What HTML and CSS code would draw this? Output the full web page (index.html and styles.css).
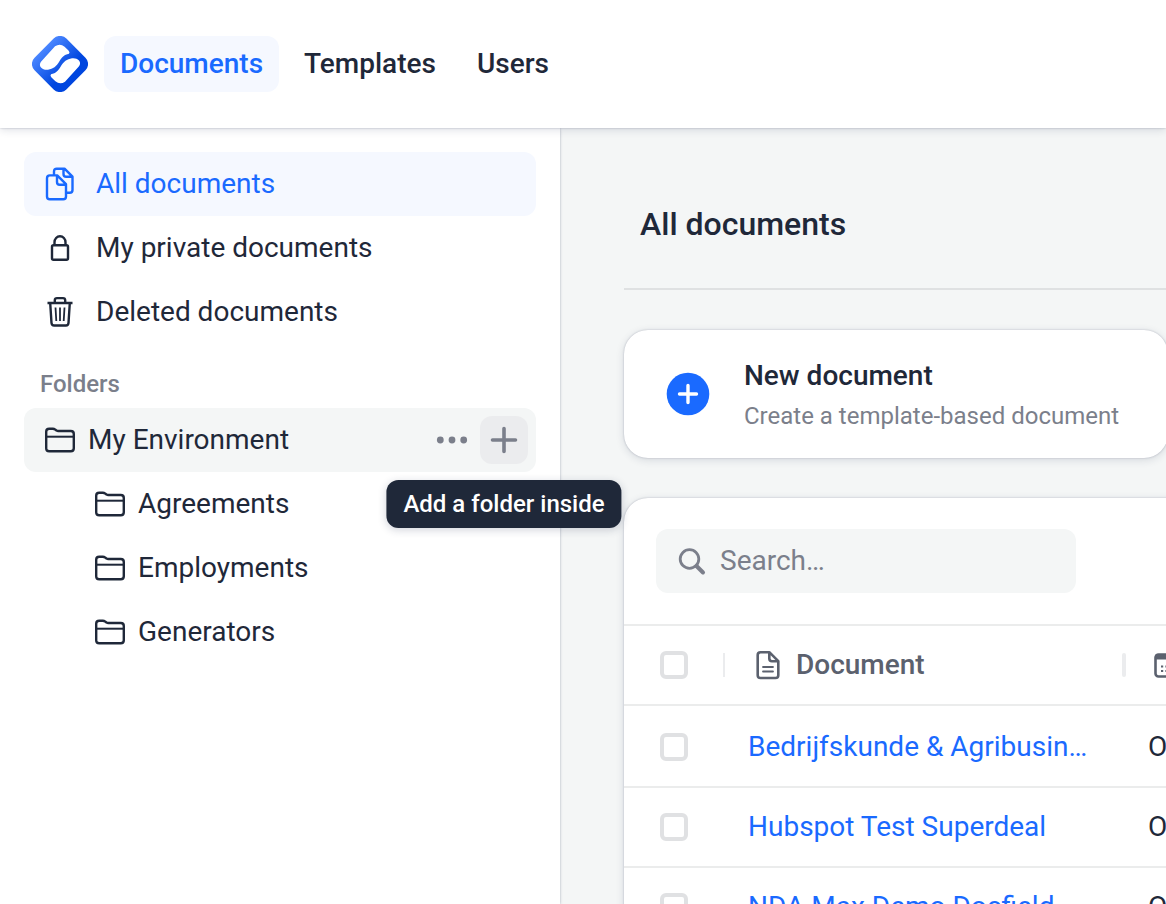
FILE: index.html
```html
<!DOCTYPE html>
<html lang="en">
<head>
  <meta charset="utf-8">
  <meta name="viewport" content="width=device-width, initial-scale=1">
  <title>All documents</title>
  <link rel="stylesheet" href="styles.css">
</head>
<body>
  <svg class="sprite" aria-hidden="true">
    <symbol id="icon-folder" viewBox="0 0 32 32">
      <path d="M2.200 24.200V7.800q0-3 3-3h3.600q1.400 0 2.400.8l1.200.8q.8.600 2 .600H26.800q3 0 3 3v14.200q0 3-3 3H5.200q-3 0-3-3z"/>
      <path d="M2.200 12.700h27.600" stroke-width="2"/>
    </symbol>
  </svg>

  <header class="topbar">
    <a class="logo" href="#" aria-label="Home">
      <svg width="56" height="56" viewBox="0 0 56 56">
        <defs>
          <linearGradient id="logo-fill" x1="5" y1="28" x2="38" y2="28" gradientUnits="userSpaceOnUse">
            <stop offset="0" stop-color="#4a86ff"/>
            <stop offset="1" stop-color="#0046df"/>
          </linearGradient>
        </defs>
        <rect x="5.500" y="5.500" width="45" height="45" rx="9" transform="rotate(45 28 28)" fill="url(#logo-fill)"/>
        <path id="logo-half" d="M23 10.300q5-3.500 9.600.4l3.900 3.800q1.800 1.800.5 3.300c-5 1-7.300 3.600-9.700 7.700c-2.900 4.900-6.200 7.400-11.300 8.200c-3 .3-5.200-.3-7-2.200q-2.300-2.900.2-6.100z" fill="#fff"/>
        <use href="#logo-half" transform="rotate(180 28 28)"/>
      </svg>
    </a>
    <nav class="tabs">
      <a class="tab active" href="#">Documents</a>
      <a class="tab" href="#">Templates</a>
      <a class="tab" href="#">Users</a>
    </nav>
  </header>

  <div class="layout">
    <aside class="sidebar">
      <nav>
        <a class="side-link active" href="#">
          <svg class="icon" viewBox="0 0 32 32">
            <path d="M10 7.500V3.500q0-2.800 2.800-2.800h7.700l8 8V22q0 2.800-2.800 2.800H23M19.500 1V6q0 2.700 2.700 2.700h6"/>
            <path d="M3 10.200Q3 7.400 5.800 7.400h7.400L22 16.200v12.300q0 2.800-2.800 2.800H5.800Q3 31.300 3 28.500zM13 7.600V14q0 2.700 2.700 2.700h6"/>
          </svg>
          All documents
        </a>
        <a class="side-link" href="#">
          <svg class="icon" viewBox="0 0 32 32">
            <rect x="8" y="13.300" width="16" height="14.400" rx="1.500"/>
            <path d="M10.500 13V10.300a5.500 6 0 0 1 11 0V13"/>
          </svg>
          My private documents
        </a>
        <a class="side-link" href="#">
          <svg class="icon" viewBox="0 0 32 32">
            <path d="M3.500 7h25M10.800 7V4.300q0-2.200 2.200-2.200h6q2.200 0 2.200 2.200V7M6.200 7l1.300 20q.2 2.500 2.600 2.500h11.800q2.400 0 2.600-2.500L25.800 7"/>
            <path class="thin" d="M11.500 11.500l.8 13.500M16 11.500V25M20.500 11.500l-.8 13.500"/>
          </svg>
          Deleted documents
        </a>
      </nav>

      <h2 class="side-title">Folders</h2>
      <ul class="folders">
        <li class="folder active">
          <a class="folder-link" href="#">
            <svg class="icon"><use href="#icon-folder"/></svg>
            My Environment
          </a>
          <div class="folder-actions">
            <button class="icon-btn" type="button" aria-label="More actions">
              <svg class="icon dots" viewBox="0 0 32 32">
                <circle cx="4.300" cy="16" r="3.400"/>
                <circle cx="16" cy="16" r="3.400"/>
                <circle cx="27.700" cy="16" r="3.400"/>
              </svg>
            </button>
            <button class="icon-btn hovered" type="button" aria-labelledby="add-tip">
              <svg class="icon plus" viewBox="0 0 32 32">
                <path d="M16 4.500v23M4.500 16h23"/>
              </svg>
              <span class="tooltip" id="add-tip" role="tooltip">Add a folder inside</span>
            </button>
          </div>
        </li>
        <li class="folder child">
          <a class="folder-link" href="#"><svg class="icon"><use href="#icon-folder"/></svg>Agreements</a>
        </li>
        <li class="folder child">
          <a class="folder-link" href="#"><svg class="icon"><use href="#icon-folder"/></svg>Employments</a>
        </li>
        <li class="folder child">
          <a class="folder-link" href="#"><svg class="icon"><use href="#icon-folder"/></svg>Generators</a>
        </li>
      </ul>
    </aside>

    <main class="content">
      <h1 class="page-title">All documents</h1>

      <button class="card new-doc" type="button">
        <svg class="new-doc-icon" width="44" height="44" viewBox="0 0 44 44">
          <circle cx="22" cy="22" r="21.300" fill="#1a6aff"/>
          <path d="M22 13.500v17M13.500 22h17" stroke="#fff" stroke-width="3.400" stroke-linecap="round"/>
        </svg>
        <span class="new-doc-text">
          <span class="new-doc-title">New document</span>
          <span class="new-doc-sub">Create a template-based document</span>
        </span>
      </button>

      <section class="card list">
        <div class="toolbar">
          <label class="search">
            <svg class="icon" viewBox="0 0 32 32">
              <circle cx="13.500" cy="14" r="9.300"/>
              <path class="handle" d="M20.500 21l6.500 6.500"/>
            </svg>
            <input type="text" placeholder="Search…" aria-label="Search">
          </label>
        </div>
        <table class="docs">
          <colgroup>
            <col class="col-check">
            <col class="col-doc">
            <col>
          </colgroup>
          <thead>
            <tr>
              <th><input class="check" type="checkbox" aria-label="Select all"></th>
              <th>
                <span class="th-label">
                  <svg class="icon" viewBox="0 0 32 32">
                    <path d="M5.700 6q0-2.800 2.800-2.800h8.800L26.300 12.200v14q0 2.800-2.800 2.800h-15q-2.800 0-2.800-2.800zM17.300 3.500V9.500q0 2.700 2.700 2.700h6"/>
                    <path class="thin" d="M11 18h10M11 22.500h10" stroke-linecap="round"/>
                  </svg>
                  Document
                </span>
              </th>
              <th class="wide">
                <span class="th-label">
                  <svg class="icon" viewBox="0 0 32 32">
                    <rect x="3.500" y="5.500" width="25" height="22" rx="3"/>
                    <path d="M3.500 8h25" stroke-width="5"/>
                    <path d="M9 17.500h16M9 22h16" stroke-width="2.200" stroke-dasharray="2.200 2.200"/>
                  </svg>
                </span>
              </th>
            </tr>
          </thead>
          <tbody>
            <tr>
              <td><input class="check" type="checkbox" aria-label="Select Bedrijfskunde"></td>
              <td class="doc-cell"><a href="#">Bedrijfskunde &amp; Agribusin…</a></td>
              <td>O</td>
            </tr>
            <tr>
              <td><input class="check" type="checkbox" aria-label="Select Hubspot Test Superdeal"></td>
              <td class="doc-cell"><a href="#">Hubspot Test Superdeal</a></td>
              <td>O</td>
            </tr>
            <tr>
              <td><input class="check" type="checkbox" aria-label="Select NDA Max Demo Docfield"></td>
              <td class="doc-cell"><a href="#">NDA Max Demo Docfield</a></td>
              <td>O</td>
            </tr>
          </tbody>
        </table>
      </section>
    </main>
  </div>
</body>
</html>
```
FILE: styles.css
```css
* {
  box-sizing: border-box;
}

body {
  display: flex;
  flex-direction: column;
  height: 100vh;
  margin: 0;
  overflow: hidden;
  background: #fff;
  color: #1f2839;
  font-family: Roboto, "Liberation Sans", sans-serif;
  font-size: 28px;
  line-height: 32px;
}

a {
  color: inherit;
  text-decoration: none;
}

button,
input {
  font: inherit;
  color: inherit;
}

button {
  padding: 0;
  border: none;
  background: none;
  cursor: pointer;
}

.sprite {
  position: absolute;
  width: 0;
  height: 0;
}

.icon {
  flex: none;
  width: 32px;
  height: 32px;
  fill: none;
  stroke: currentColor;
  stroke-width: 2.4;
  stroke-linejoin: round;
  overflow: visible;
}

.icon .thin {
  stroke-width: 1.8;
}

/* top bar */

.topbar {
  position: relative;
  z-index: 2;
  display: flex;
  flex: none;
  align-items: center;
  gap: 16px;
  height: 128px;
  padding: 0 32px;
  background: #fff;
  box-shadow: 0 0 2px rgba(31, 40, 77, 0.28), 0 2px 8px rgba(31, 40, 77, 0.14);
}

.logo,
.logo svg {
  display: block;
}

.tabs {
  display: flex;
  gap: 9px;
}

.tab {
  padding: 12px 16px;
  border-radius: 12px;
  font-weight: 500;
}

.tab.active {
  background: #f5f8ff;
  color: #1a6aff;
}

.layout {
  display: flex;
  flex: 1;
  min-height: 0;
}

/* sidebar */

.sidebar {
  position: relative;
  z-index: 1;
  flex: none;
  width: 560px;
  padding: 24px;
  background: #fff;
  box-shadow: 0 0 2px rgba(31, 40, 77, 0.28), 0 2px 4px rgba(31, 40, 77, 0.08);
}

.side-link {
  display: flex;
  align-items: center;
  gap: 20px;
  height: 64px;
  padding: 0 20px;
  border-radius: 12px;
}

.side-link.active {
  background: #f5f8ff;
  color: #1a6aff;
}

.side-title {
  margin: 0;
  padding: 24px 16px 8px;
  color: #7b7f8b;
  font-size: 24px;
  font-weight: 500;
}

.folders {
  margin: 0;
  padding: 0;
  list-style: none;
}

.folder {
  display: flex;
  align-items: center;
  height: 64px;
  padding: 0 8px 0 20px;
  border-radius: 12px;
}

.folder.active {
  background: #f4f6f6;
}

.folder.child {
  padding-left: 70px;
}

.folder-link {
  display: flex;
  flex: 1;
  align-items: center;
  gap: 12px;
}

.folder-actions {
  display: flex;
  gap: 4px;
  color: #7b7f8b;
}

.icon-btn {
  position: relative;
  display: grid;
  place-items: center;
  width: 48px;
  height: 48px;
  border-radius: 12px;
}

.icon-btn.hovered {
  background: #ebecee;
}

.dots {
  fill: currentColor;
  stroke: none;
}

.plus {
  stroke-width: 3.6;
  stroke-linecap: round;
}

.tooltip {
  position: absolute;
  top: calc(100% + 16px);
  left: 50%;
  transform: translateX(-50%);
  padding: 8px 17px;
  border-radius: 12px;
  background: #1f2839;
  box-shadow: 0 2px 8px rgba(31, 40, 77, 0.2);
  color: #fff;
  font-size: 24px;
  font-weight: 500;
  white-space: nowrap;
}

/* main content */

.content {
  flex: 1;
  min-width: 0;
  padding: 64px 0 0 64px;
  overflow: hidden;
  background: #f4f6f6;
}

.page-title {
  margin: 0 0 40px;
  padding: 16px 16px 48px;
  border-bottom: 2px solid #dfe1e2;
  font-size: 32px;
  font-weight: 500;
}

.card {
  border-radius: 24px;
  background: #fff;
  box-shadow: 0 0 2px rgba(31, 40, 77, 0.28), 0 2px 8px rgba(31, 40, 77, 0.14);
}

.new-doc {
  display: flex;
  align-items: center;
  gap: 34px;
  width: 544px;
  margin-bottom: 40px;
  padding: 24px 42px;
  text-align: left;
}

.new-doc-icon {
  flex: none;
}

.new-doc-text {
  display: flex;
  flex-direction: column;
  gap: 8px;
  padding: 6px 0 2px;
  white-space: nowrap;
}

.new-doc-title {
  font-weight: 500;
}

.new-doc-sub {
  color: #7b7f8b;
  font-size: 24px;
}

.list {
  min-width: 1000px;
  min-height: 100%;
}

.toolbar {
  padding: 31px 32px;
}

.search {
  display: flex;
  align-items: center;
  gap: 12px;
  width: 420px;
  height: 64px;
  padding: 0 20px;
  border-radius: 12px;
  background: #f4f6f6;
  color: #7b7f8b;
}

.search .icon {
  stroke-width: 2.8;
}

.search .handle {
  stroke-width: 4;
  stroke-linecap: round;
}

.search input {
  flex: 1;
  min-width: 0;
  padding: 0;
  border: none;
  outline: none;
  background: none;
}

.search input::placeholder {
  color: #7b7f8b;
  opacity: 1;
}

.docs {
  width: 100%;
  table-layout: fixed;
  border-collapse: separate;
  border-spacing: 0;
  border-top: 2px solid #ebecec;
}

.col-check {
  width: 100px;
}

.col-doc {
  width: 400px;
}

.docs th,
.docs td {
  height: 80px;
  padding: 0 24px;
  border-bottom: 2px solid #ebecec;
  text-align: left;
  white-space: nowrap;
}

.docs th {
  padding: 0;
  color: #5b616e;
  font-weight: 500;
}

.docs tbody tr:first-child td {
  height: 82px;
  padding-top: 2px;
}

.docs th:first-child,
.docs td:first-child {
  padding-right: 36px;
  padding-left: 36px;
}

.doc-cell {
  overflow: hidden;
  color: #1a6aff;
  text-overflow: ellipsis;
}

.th-label {
  display: flex;
  align-items: center;
  gap: 12px;
}

/* column separator */
.th-label::before {
  content: "";
  width: 2px;
  height: 24px;
  margin-right: 15px;
  margin-left: -1px;
  background: #ebecee;
}

.wide .th-label::before {
  width: 4px;
  margin-right: 14px;
  margin-left: -2px;
  border-radius: 2px;
}

.th-label .icon {
  stroke-width: 2.6;
}

.check {
  display: block;
  appearance: none;
  width: 28px;
  height: 28px;
  margin: 0;
  border: 4px solid #e0e1e3;
  border-radius: 6px;
  background: #fff;
}

.check:checked {
  border-color: #1a6aff;
  background: #1a6aff;
}
```
